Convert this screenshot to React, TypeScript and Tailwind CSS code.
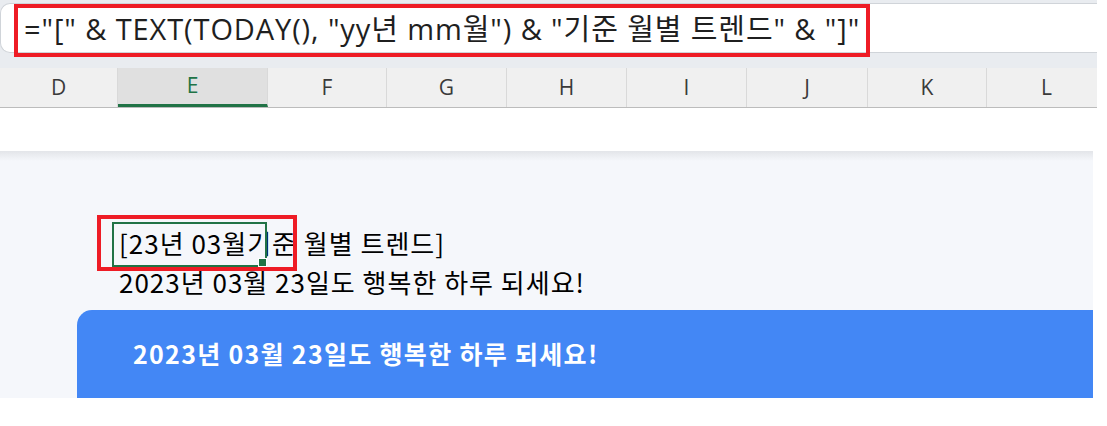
import React from 'react';

const columns = [
  { name: 'D', w: 'w-[118px]' },
  { name: 'E', w: 'w-[150px]', active: true },
  { name: 'F', w: 'w-[119px]' },
  { name: 'G', w: 'w-[120px]' },
  { name: 'H', w: 'w-[120px]' },
  { name: 'I', w: 'w-[120px]' },
  { name: 'J', w: 'w-[121px]' },
  { name: 'K', w: 'w-[119px]' },
  { name: 'L', w: 'w-[120px]' },
];

export default function App() {
  return (
    <div className="relative w-[1107px] h-[426px] bg-white overflow-hidden font-['Noto_Sans_CJK_KR',sans-serif] text-black">
      {/* formula bar */}
      <div className="w-[1097px] bg-[#e9ecf0] pt-[3px] pb-[15px]">
        <div className="h-[50px] bg-white border border-r-0 border-[#d0d4d9] rounded-l-[10px] flex items-center pl-[23px]">
          <span className="text-[29px] leading-none tracking-[0.9px] text-[#1f1f1f] whitespace-pre font-['Open_Sans','Noto_Sans_CJK_KR',sans-serif]">
            ="[" &amp; TEXT(TODAY(), "yy년 mm월") &amp; "기준 월별 트렌드" &amp; "]"
          </span>
        </div>
      </div>

      {/* column headers */}
      <div className="flex w-[1097px] h-[40px] overflow-hidden bg-[#f0f0f0] border-b border-[#bcbcbc]">
        {columns.map((c) => (
          <div
            key={c.name}
            className={`${c.w} shrink-0 flex items-center justify-center border-r border-[#d9d9d9] text-[21px] font-['Open_Sans',sans-serif] ${
              c.active ? 'bg-[#e0e0e0] text-[#217346] border-b-[3px] border-b-[#217346]' : 'text-[#3a3a3a]'
            }`}
          >
            {c.name}
          </div>
        ))}
      </div>

      <div className="h-[43px]" />

      {/* sheet content */}
      <div className="w-[1093px] h-[247px] bg-[#f5f7fb] flex flex-col">
        <div className="h-[10px] bg-gradient-to-b from-[#e3e5e9] to-[#f5f7fb]" />
        <div className="pl-[119px] pt-[62px] flex flex-col text-[26px] leading-[39px] tracking-[1px] whitespace-pre">
          <div>[23년 03월기준 월별 트렌드]</div>
          <div>2023년 03월 23일도 행복한 하루 되세요!</div>
        </div>
        <div className="mt-auto ml-[77px] h-[88px] bg-[#4387f5] rounded-tl-[15px] flex items-center pl-[56px]">
          <span className="text-white font-bold text-[25px] tracking-[1.3px] whitespace-pre">2023년 03월 23일도 행복한 하루 되세요!</span>
        </div>
      </div>

      {/* annotations */}
      <div className="absolute left-[14px] top-[4px] w-[856px] h-[53px] border-[4px] border-[#ee1c25]" />
      <div className="absolute left-[112px] top-[222px] w-[155px] h-[45px] border-[2px] border-[#217346]">
        <div className="absolute -right-[2px] -bottom-[2px] w-[9px] h-[9px] bg-[#217346] border border-white" />
      </div>
      <div className="absolute left-[97px] top-[215px] w-[200px] h-[56px] border-[4px] border-[#ee1c25]" />
    </div>
  );
}
